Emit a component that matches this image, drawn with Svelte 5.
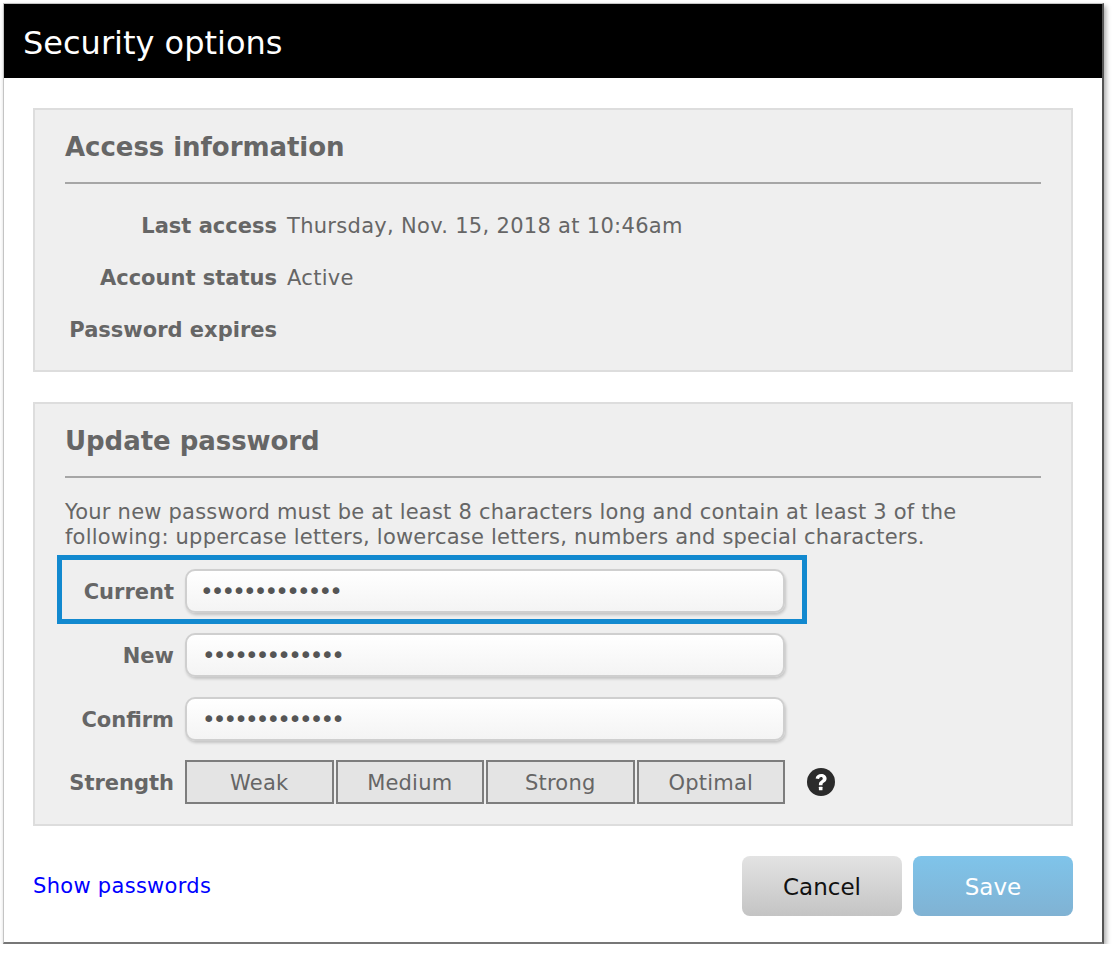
<script>
  const info = [
    { label: 'Last access', value: 'Thursday, Nov. 15, 2018 at 10:46am' },
    { label: 'Account status', value: 'Active' },
    { label: 'Password expires', value: '' }
  ];
  const fields = [
    { label: 'Current', focus: true },
    { label: 'New', focus: false },
    { label: 'Confirm', focus: false }
  ];
  const levels = ['Weak', 'Medium', 'Strong', 'Optimal'];
</script>

<main class="dialog">
  <header class="dialog__title">Security options</header>

  <div class="dialog__body">
    <section class="panel panel--info">
      <h2 class="panel__headline">Access information</h2>
      <dl class="info">
        {#each info as row}
          <dt>{row.label}</dt>
          <dd>{row.value}</dd>
        {/each}
      </dl>
    </section>

    <section class="panel panel--password">
      <h2 class="panel__headline">Update password</h2>
      <p class="hint">
        Your new password must be at least 8 characters long and contain at least 3 of the
        following: uppercase letters, lowercase letters, numbers and special characters.
      </p>
      <div class="fields">
        {#each fields as field}
          <div class="field" class:field--focus={field.focus}>
            <label class="field__label" for={field.label}>{field.label}</label>
            <input id={field.label} class="field__input" type="password" value="xxxxxxxxxxxxx" readonly />
          </div>
        {/each}
        <div class="field field--strength">
          <span class="field__label">Strength</span>
          <div class="levels">
            {#each levels as level}
              <div class="level">{level}</div>
            {/each}
          </div>
          <svg class="help" viewBox="0 0 28 28" aria-hidden="true">
            <circle cx="14" cy="14" r="14" fill="#2b2b2b" />
            <path d="M8.600 10.600c.5-3 2.700-4.600 5.600-4.600 3.100 0 5.400 1.800 5.400 4.500 0 2-1 3.100-2.600 4.100-1.200.8-1.500 1.200-1.500 2.200v.5h-3.600v-.8c0-1.800.7-2.800 2.200-3.800 1.100-.7 1.700-1.200 1.700-2.100 0-.9-.7-1.500-1.700-1.500-1.100 0-1.800.7-2 1.900z" fill="#fff" />
            <rect x="11.900" y="18.800" width="3.600" height="3.400" rx=".5" fill="#fff" />
          </svg>
        </div>
      </div>
    </section>

    <footer class="actions">
      <a class="actions__link" href="#show">Show passwords</a>
      <div class="actions__buttons">
        <button class="btn btn--cancel">Cancel</button>
        <button class="btn btn--save">Save</button>
      </div>
    </footer>
  </div>
</main>

<style>
  :global(body) {
    background: #fff;
    font-family: "DejaVu Sans", Verdana, sans-serif;
    color: #666;
  }
  .dialog {
    width: 1101px;
    height: 941px;
    box-sizing: border-box;
    margin: 3px 0 0 3px;
    border: 1px solid #c4c4c4;
    border-right: 2px solid #555;
    border-bottom: 2px solid #777;
    box-shadow: 2px 3px 5px rgba(0, 0, 0, 0.35);
    display: flex;
    flex-direction: column;
    background: #fff;
  }
  .dialog__title {
    height: 74px;
    background: #000;
    color: #fff;
    font-size: 32px;
    line-height: 78px;
    padding-left: 19px;
    flex: none;
  }
  .dialog__body {
    padding: 30px 29px 0 29px;
  }
  .panel {
    box-sizing: border-box;
    background: #efefef;
    border: 2px solid #ddd;
    padding: 0 30px;
  }
  .panel--info {
    height: 264px;
  }
  .panel--password {
    height: 424px;
    margin-top: 30px;
  }
  .panel__headline {
    margin: 0;
    height: 74px;
    box-sizing: border-box;
    border-bottom: 2px solid #a6a6a6;
    font-size: 26px;
    font-weight: 700;
    letter-spacing: -0.05px;
    line-height: 74px;
    color: #666;
  }
  .info {
    margin: 16px 0 0;
    display: grid;
    grid-template-columns: 212px 1fr;
    grid-auto-rows: 52px;
    column-gap: 10px;
    font-size: 21px;
    line-height: 52px;
  }
  .info dt {
    text-align: right;
    font-weight: 700;
  }
  .info dd {
    margin: 0;
    letter-spacing: 0.3px;
  }
  .hint {
    margin: 22px 0 0;
    font-size: 21px;
    line-height: 25px;
    letter-spacing: 0.22px;
  }
  .fields {
    margin-top: 9px;
    display: flex;
    flex-direction: column;
    margin-left: -30px;
  }
  .field {
    display: flex;
    align-items: center;
    height: 64px;
    position: relative;
  }
  .field--focus::before {
    content: '';
    position: absolute;
    left: 22px;
    top: -4px;
    width: 750px;
    height: 69px;
    box-sizing: border-box;
    border: 5px solid #1289cf;
    pointer-events: none;
  }
  .field__label {
    width: 139px;
    flex: none;
    text-align: right;
    font-size: 21px;
    font-weight: 700;
    margin-right: 11px;
    padding-top: 2px;
  }
  .field__input {
    width: 600px;
    height: 44px;
    box-sizing: border-box;
    margin: 0;
    padding: 0 16px 0 15px;
    border: 2px solid #cfcfcf;
    border-radius: 10px;
    background: linear-gradient(#fff, #f4f4f4);
    box-shadow: 1px 2px 3px rgba(0, 0, 0, 0.18);
    font-family: "DejaVu Sans", Verdana, sans-serif;
    font-size: 23px;
    letter-spacing: -2.8px;
    color: #555;
    outline: none;
  }
  .field--focus .field__input {
    padding-left: 13px;
  }
  .field--strength {
    height: 44px;
    margin-top: 9px;
  }
  .levels {
    width: 600px;
    display: grid;
    grid-template-columns: repeat(4, 1fr);
    column-gap: 2px;
    flex: none;
  }
  .level {
    height: 44px;
    box-sizing: border-box;
    border: 2px solid #7d7d7d;
    background: #e4e4e4;
    text-align: center;
    font-size: 21px;
    letter-spacing: 0.2px;
    line-height: 42px;
  }
  .help {
    width: 28px;
    height: 28px;
    margin-left: 22px;
    flex: none;
  }
  .actions {
    margin-top: 30px;
    display: flex;
    justify-content: space-between;
    align-items: center;
    height: 60px;
  }
  .actions__link {
    color: #0000ff;
    font-size: 21px;
    letter-spacing: 0.3px;
    text-decoration: none;
  }
  .actions__buttons {
    display: flex;
    gap: 11px;
  }
  .btn {
    width: 160px;
    height: 60px;
    border: none;
    border-radius: 8px;
    font-family: "DejaVu Sans", Verdana, sans-serif;
    font-size: 23px;
    padding: 2px 0 0;
  }
  .btn--cancel {
    background: linear-gradient(#e3e3e3, #c4c4c4);
    color: #111;
  }
  .btn--save {
    background: linear-gradient(#7fc4ea, #80b2d3);
    color: #fff;
  }
</style>
